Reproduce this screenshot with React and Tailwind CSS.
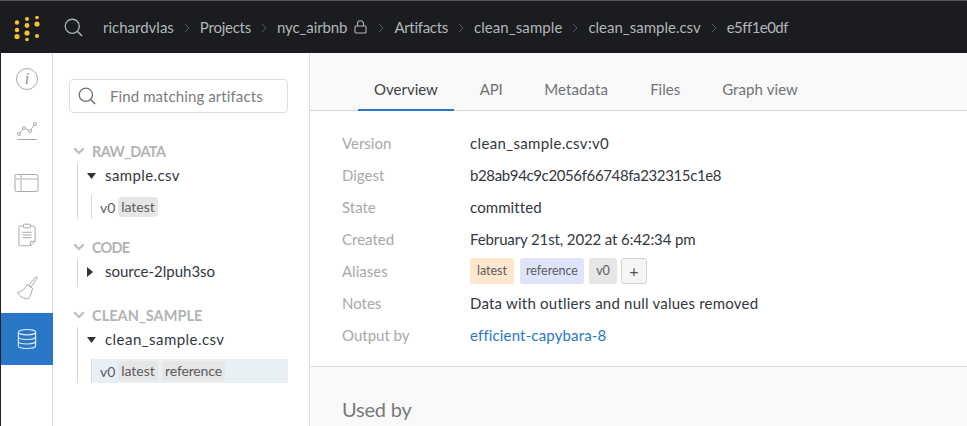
import React from "react";

function Logo() {
  return (
    <svg width="53" height="52" viewBox="0 0 53 52" className="shrink-0">
      {[[17,21.500,2.200],[17,29,2.200],[17,35.500,2.600],[27,18,2],[27,24.500,2.400],[27,32,2.600],[27,38.500,1.800],[37,16.500,1.800],[37,23,2.600],[37,35,2]].map(([x,y,r],i)=>(
        <circle key={i} cx={x} cy={y} r={r} fill="#fbc02d" />
      ))}
    </svg>
  );
}

function Search({ color, size = 20 }) {
  return (
    <svg width={size} height={size} viewBox="0 0 20 20" fill="none" stroke={color} strokeWidth="1.400">
      <circle cx="8.700" cy="8.700" r="7.400" />
      <path d="M14 14l5 5" strokeWidth="1.600" />
    </svg>
  );
}

function Sep() {
  return (
    <svg width="6" height="10" viewBox="0 0 6 10" fill="none" stroke="#55585c" strokeWidth="1" className="mx-[10px] mt-[1px]">
      <path d="M.8.8 5 5 .8 9.200" />
    </svg>
  );
}

function Header() {
  return (
    <div className="h-[53px] bg-[#1a1c1f] border-t border-[#555] flex items-center text-[#b3b6b9] text-[15px] shrink-0">
      <Logo />
      <div className="ml-[11px] mr-[20px] flex"><Search color="#b0b3b6" size={19} /></div>
      <span>richardvlas</span><Sep />
      <span className="tracking-[-0.25px]">Projects</span><Sep />
      <span className="tracking-[-0.1px]">nyc_airbnb</span>
      <svg width="13" height="14" viewBox="0 0 13 14" fill="none" stroke="#b3b6b9" strokeWidth="1.100" className="ml-[7px] mr-[1px]">
        <rect x="1" y="6" width="11" height="7" rx="1" />
        <path d="M3.500 6V3.800a3 3 0 0 1 6 0V6" />
      </svg>
      <Sep />
      <span className="tracking-[-0.3px]">Artifacts</span><Sep />
      <span className="tracking-[0.08px]">clean_sample</span><Sep />
      <span>clean_sample.csv</span><Sep />
      <span className="tracking-[-0.55px]">e5ff1e0df</span>
    </div>
  );
}

function Rail() {
  const c = "#a9a9a9";
  return (
    <div className="w-[53px] border-r border-[#d8d8d8] border-l border-l-[#222] flex flex-col shrink-0 bg-white">
      <div className="h-[52px] flex items-center justify-center">
        <svg width="24" height="24" viewBox="0 0 24 24" fill="none" stroke={c} strokeWidth="1">
          <circle cx="12" cy="12" r="10.500" />
          <text x="12" y="17" textAnchor="middle" fontFamily="Liberation Serif" fontStyle="italic" fontSize="16" fill="#8f8f8f" stroke="none">i</text>
        </svg>
      </div>
      <div className="h-[52px] flex items-center justify-center">
        <svg width="22" height="20" viewBox="0 0 22 20" fill="none" stroke={c} strokeWidth="1">
          <path d="M3 13 8 7 14 10 19 3" />
          <circle cx="3" cy="13" r="1.500" fill="white" /><circle cx="8" cy="7" r="1.500" fill="white" /><circle cx="14" cy="10" r="1.500" fill="white" /><circle cx="19" cy="3" r="1.500" fill="white" />
          <path d="M1 18.500h20" />
        </svg>
      </div>
      <div className="h-[52px] flex items-center justify-center">
        <svg width="25" height="20" viewBox="0 0 25 20" fill="none" stroke={c} strokeWidth="1">
          <rect x="1" y="1.500" width="23" height="17" rx="1.500" />
          <path d="M1 6h23M7 1.500v17" stroke="#c9c9c9" strokeWidth="1.500" />
        </svg>
      </div>
      <div className="h-[52px] flex items-center justify-center">
        <svg width="18" height="24" viewBox="0 0 20 26" fill="none" stroke={c} strokeWidth="1.100">
          <path d="M6 3H2.500A1.500 1.500 0 0 0 1 4.500V23.500A1.500 1.500 0 0 0 2.500 25H14l5-5V4.500A1.500 1.500 0 0 0 17.500 3H14" />
          <rect x="6" y="1" width="8" height="4" rx="1" />
          <path d="M5 10h10M5 13h10M5 16h10M14 25v-5h5" />
        </svg>
      </div>
      <div className="h-[52px] flex items-center justify-center">
        <svg width="22" height="26" viewBox="0 0 22 26" fill="none" stroke={c} strokeWidth="1">
          <path d="M20 2.500 21.500 3.500 15 13 12.500 11.500Z" />
          <path d="M11 10.500 16.500 14C16 18 14.500 22 12 25 8 25 3.500 22 1.500 18.500 5.500 17.500 9 15 11 10.500Z" />
        </svg>
      </div>
      <div className="h-[52px] -mr-[1px] flex items-center justify-center bg-[#2a77c7]">
        <svg width="20" height="22" viewBox="0 0 22 24" fill="none" stroke="#e6effa" strokeWidth="1.200">
          <ellipse cx="11" cy="4.500" rx="9.500" ry="3" />
          <path d="M1.500 4.500v15c0 1.700 4.300 3 9.500 3s9.500-1.300 9.500-3v-15" />
          <path d="M1.500 9.500c0 1.700 4.300 3 9.500 3s9.500-1.300 9.500-3M1.500 14.500c0 1.700 4.300 3 9.500 3s9.500-1.300 9.500-3" />
        </svg>
      </div>
      <div className="flex-1" />
    </div>
  );
}

function Chev() {
  return (
    <svg width="12" height="8" viewBox="0 0 12 8" fill="none" stroke="#bdbdbd" strokeWidth="2.200">
      <path d="M1.200 1.200 6 6 10.800 1.200" />
    </svg>
  );
}

function Pill({ children, cls = "" }) {
  return <span className={`h-[20px] rounded-[4px] bg-[#e6e6e6] text-[#5a5c60] text-[14px] leading-[20px] text-center inline-block ${cls}`}>{children}</span>;
}

function Group({ name, nameCls, file, fileCls, open, pills, active, mt }) {
  return (
    <div className={mt}>
      <div className={`h-[16px] flex items-center text-[14.5px] font-bold text-[#b3b3b3] ${nameCls}`}>
        <span className="w-[19px] flex"><Chev /></span>
        <span className="mt-[2px]">{name}</span>
      </div>
      <div className={`ml-[4px] mt-[4px] border-l border-[#d6d6d6] pl-[9px] ${pills ? "" : "pb-[3px]"}`}>
        <div className="h-[25px] flex items-center text-[15px] text-[#33383e]">
          <span className="w-[18px] flex">
            {open ? (
              <svg width="9" height="6" viewBox="0 0 9 6"><path d="M0 0h9L4.500 6z" fill="#333" /></svg>
            ) : (
              <svg width="6" height="10" viewBox="0 0 6 10"><path d="M0 0l6 5-6 5z" fill="#333" /></svg>
            )}
          </span>
          <span className={fileCls}>{file}</span>
        </div>
        {pills && (
          <div className={`mt-[7px] ml-[4px] border-l border-[#d6d6d6] h-[24px] flex items-center pl-[8px] gap-[4px] text-[14px] text-[#5a5c60] ${active ? "bg-[#e8f0f6]" : ""}`}>
            <span className="w-[14px]">v0</span>
            {pills}
          </div>
        )}
      </div>
    </div>
  );
}

function Sidebar() {
  return (
    <div className="w-[257px] bg-white border-r border-[#dedede] shrink-0 pl-[16px] pr-[21px] pt-[26px]">
      <div className="h-[34px] border border-[#dedede] rounded-[4px] flex items-center pl-[8px]">
        <Search color="#6e6e6e" size={18} />
        <span className="ml-[14px] text-[15px] text-[#7a7d80] tracking-[0.1px]">Find matching artifacts</span>
      </div>
      <div className="mt-[30px] pl-[4px]">
        <Group name="RAW_DATA" nameCls="tracking-[-0.6px]" file="sample.csv" fileCls="tracking-[0.4px]" open pills={<Pill cls="w-[40px]">latest</Pill>} />
        <Group mt="mt-[20px]" name="CODE" nameCls="tracking-[-0.8px]" file="source-2lpuh3so" />
        <Group mt="mt-[20px]" name="CLEAN_SAMPLE" nameCls="tracking-[0.05px]" file="clean_sample.csv" fileCls="tracking-[0.45px]" open active pills={<><Pill cls="w-[40px]">latest</Pill><Pill cls="w-[63px] tracking-[-0.15px]">reference</Pill></>} />
      </div>
    </div>
  );
}

function Tab({ children, active, cls = "" }) {
  return (
    <div className={`h-[42px] flex items-center px-[16px] mr-[10px] text-[15px] ${cls} ${active ? "text-[#3c4043] border-b-[2px] border-[#2a77c7] mb-[-1px]" : "text-[#6f7276]"}`}>
      {children}
    </div>
  );
}

function Row({ label, cls = "", children }) {
  return (
    <div className="h-[32px] flex items-center">
      <div className="w-[128px] text-[#a8a8a8]">{label}</div>
      <div className={`text-[#33383e] ${cls}`}>{children}</div>
    </div>
  );
}

function Tag({ bg, w, children }) {
  return <span className={`h-[26px] rounded-[3px] text-[12.5px] leading-[25px] text-center text-[#5a5c60] ${w} ${bg}`}>{children}</span>;
}

function Main() {
  return (
    <div className="flex-1 min-w-0 flex flex-col bg-[#f9f9f9]">
      <div className="h-[58px] border-b border-[#d8d8d8] flex items-end pl-[48px] shrink-0">
        <Tab active>Overview</Tab>
        <Tab cls="tracking-[-0.3px]">API</Tab>
        <Tab cls="tracking-[0.1px]">Metadata</Tab>
        <Tab>Files</Tab>
        <Tab cls="tracking-[0.1px]">Graph view</Tab>
      </div>
      <div className="bg-white h-[256px] border-b border-[#dedede] pl-[32px] pt-[16px] text-[15px] shrink-0">
        <Row label="Version" cls="tracking-[0.35px]">clean_sample.csv:v0</Row>
        <Row label="Digest" cls="tracking-[-0.37px]">b28ab94c9c2056f66748fa232315c1e8</Row>
        <Row label="State" cls="tracking-[0.1px]">committed</Row>
        <Row label="Created" cls="tracking-[-0.12px]">February 21st, 2022 at 6:42:34 pm</Row>
        <Row label="Aliases">
          <div className="flex items-center">
            <Tag w="w-[44px]" bg="bg-[#ffe6cc]">latest</Tag>
            <Tag w="w-[64px] ml-[6px]" bg="bg-[#e0e4fb]">reference</Tag>
            <Tag w="w-[28px] ml-[5px]" bg="bg-[#e6e6e6]">v0</Tag>
            <span className="h-[26px] w-[26px] ml-[4px] flex items-center justify-center border border-[#d2d2d2] rounded-[3px] bg-[#f5f5f5] text-[#555] text-[16px]">+</span>
          </div>
        </Row>
        <Row label="Notes" cls="tracking-[0.22px]">Data with outliers and null values removed</Row>
        <Row label="Output by" cls="tracking-[0.15px]"><span className="text-[#2a77c7]">efficient-capybara-8</span></Row>
      </div>
      <div className="pl-[32px] pt-[28px] text-[20px] text-[#77797c] leading-[28px] tracking-[-0.2px]">Used by</div>
    </div>
  );
}

export default function App() {
  return (
    <div className="w-[967px] h-[426px] overflow-hidden flex flex-col bg-white" style={{ fontFamily: 'Lato, sans-serif' }}>
      <Header />
      <div className="flex flex-1 min-h-0">
        <Rail />
        <Sidebar />
        <Main />
      </div>
    </div>
  );
}
